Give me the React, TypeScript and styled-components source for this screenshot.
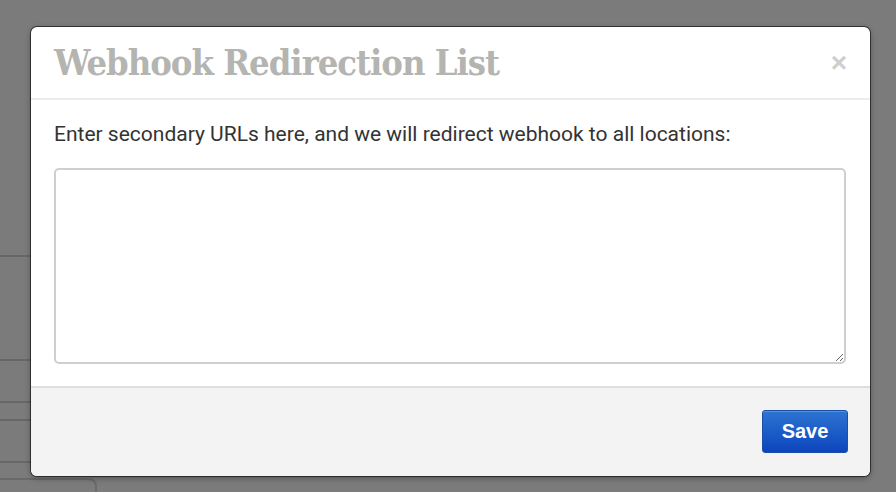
import styled, { createGlobalStyle } from "styled-components"

const GlobalStyle = createGlobalStyle`
    html, body {
        margin: 0;
        padding: 0;
        background: #7b7b7b;
    }
    * {
        box-sizing: border-box;
    }
`

const Screen = styled.div`
    position: relative;
    width: 896px;
    height: 492px;
    overflow: hidden;
    background-color: #7b7b7b;
`

const PageBehind = styled.div`
    display: flex;
    flex-direction: column;
    width: 420px;
`

const PageRow = styled.div<{ h: number }>`
    height: ${({ h }) => h}px;
    border-bottom: 2px solid #676767;
`

const PageTab = styled.div`
    width: 97px;
    height: 30px;
    margin-top: 15px;
    border: 2px solid #6a6a6a;
    border-left: none;
    border-radius: 0 8px 0 0;
`

const Modal = styled.div`
    position: absolute;
    left: 31px;
    top: 27px;
    width: 839px;
    height: 449px;
    display: flex;
    flex-direction: column;
    background-color: #fff;
    border-radius: 6px;
    box-shadow: 0 0 0 1px rgba(0, 0, 0, 0.55), 0 2px 6px rgba(0, 0, 0, 0.35);
    overflow: hidden;
`

const ModalHeader = styled.div`
    height: 73px;
    display: flex;
    align-items: center;
    justify-content: space-between;
    padding: 0 23px 2px 23px;
    border-bottom: 2px solid #ededed;
`

const Title = styled.h3`
    margin: 0;
    font-family: "DejaVu Serif Condensed", "DejaVu Serif", "Liberation Serif", serif;
    font-stretch: condensed;
    font-weight: bold;
    font-size: 36px;
    letter-spacing: -1px;
    color: #b4b4b1;
`

const CloseBtn = styled.button`
    border: none;
    background: none;
    padding: 0;
    margin-top: 2px;
    font-family: "Liberation Sans", Arial, sans-serif;
    font-weight: bold;
    font-size: 28px;
    line-height: 1;
    color: #cfcfcf;
    cursor: pointer;
`

const ModalBody = styled.div`
    flex: 1;
    display: flex;
    flex-direction: column;
    gap: 20px;
    padding: 20px 23px 0 23px;
`

const Label = styled.p`
    margin: 0;
    font-family: Roboto, "Liberation Sans", sans-serif;
    font-size: 21px;
    line-height: 28px;
    color: #333;
`

const UrlArea = styled.textarea`
    width: 792px;
    height: 196px;
    border: 2px solid #cfcfcf;
    border-radius: 5px;
    resize: both;
    font-family: Roboto, "Liberation Sans", sans-serif;
    font-size: 16px;
    outline: none;
`

const ModalFooter = styled.div`
    height: 90px;
    display: flex;
    justify-content: flex-end;
    align-items: flex-start;
    padding: 22px 22px 0 0;
    background-color: #f3f3f3;
    border-top: 2px solid #dedede;
`

const SaveBtn = styled.button`
    width: 86px;
    height: 43px;
    border: 1px solid #1b4ea5;
    border-radius: 3px;
    background: linear-gradient(to bottom, #2d74d2, #0c45bd);
    color: #fff;
    font-family: "Liberation Sans", Arial, sans-serif;
    font-weight: bold;
    font-size: 20px;
    box-shadow: inset 0 1px 0 rgba(255, 255, 255, 0.2);
    cursor: pointer;
`

export default function App() {
    const rows = [257, 104, 42, 18, 42]
    return (
        <Screen>
            <GlobalStyle />
            <PageBehind>
                {rows.map((h, i) => (
                    <PageRow key={i} h={h} />
                ))}
                <PageTab />
            </PageBehind>
            <Modal>
                <ModalHeader>
                    <Title>Webhook Redirection List</Title>
                    <CloseBtn aria-label="Close">×</CloseBtn>
                </ModalHeader>
                <ModalBody>
                    <Label>Enter secondary URLs here, and we will redirect webhook to all locations:</Label>
                    <UrlArea />
                </ModalBody>
                <ModalFooter>
                    <SaveBtn>Save</SaveBtn>
                </ModalFooter>
            </Modal>
        </Screen>
    )
}
